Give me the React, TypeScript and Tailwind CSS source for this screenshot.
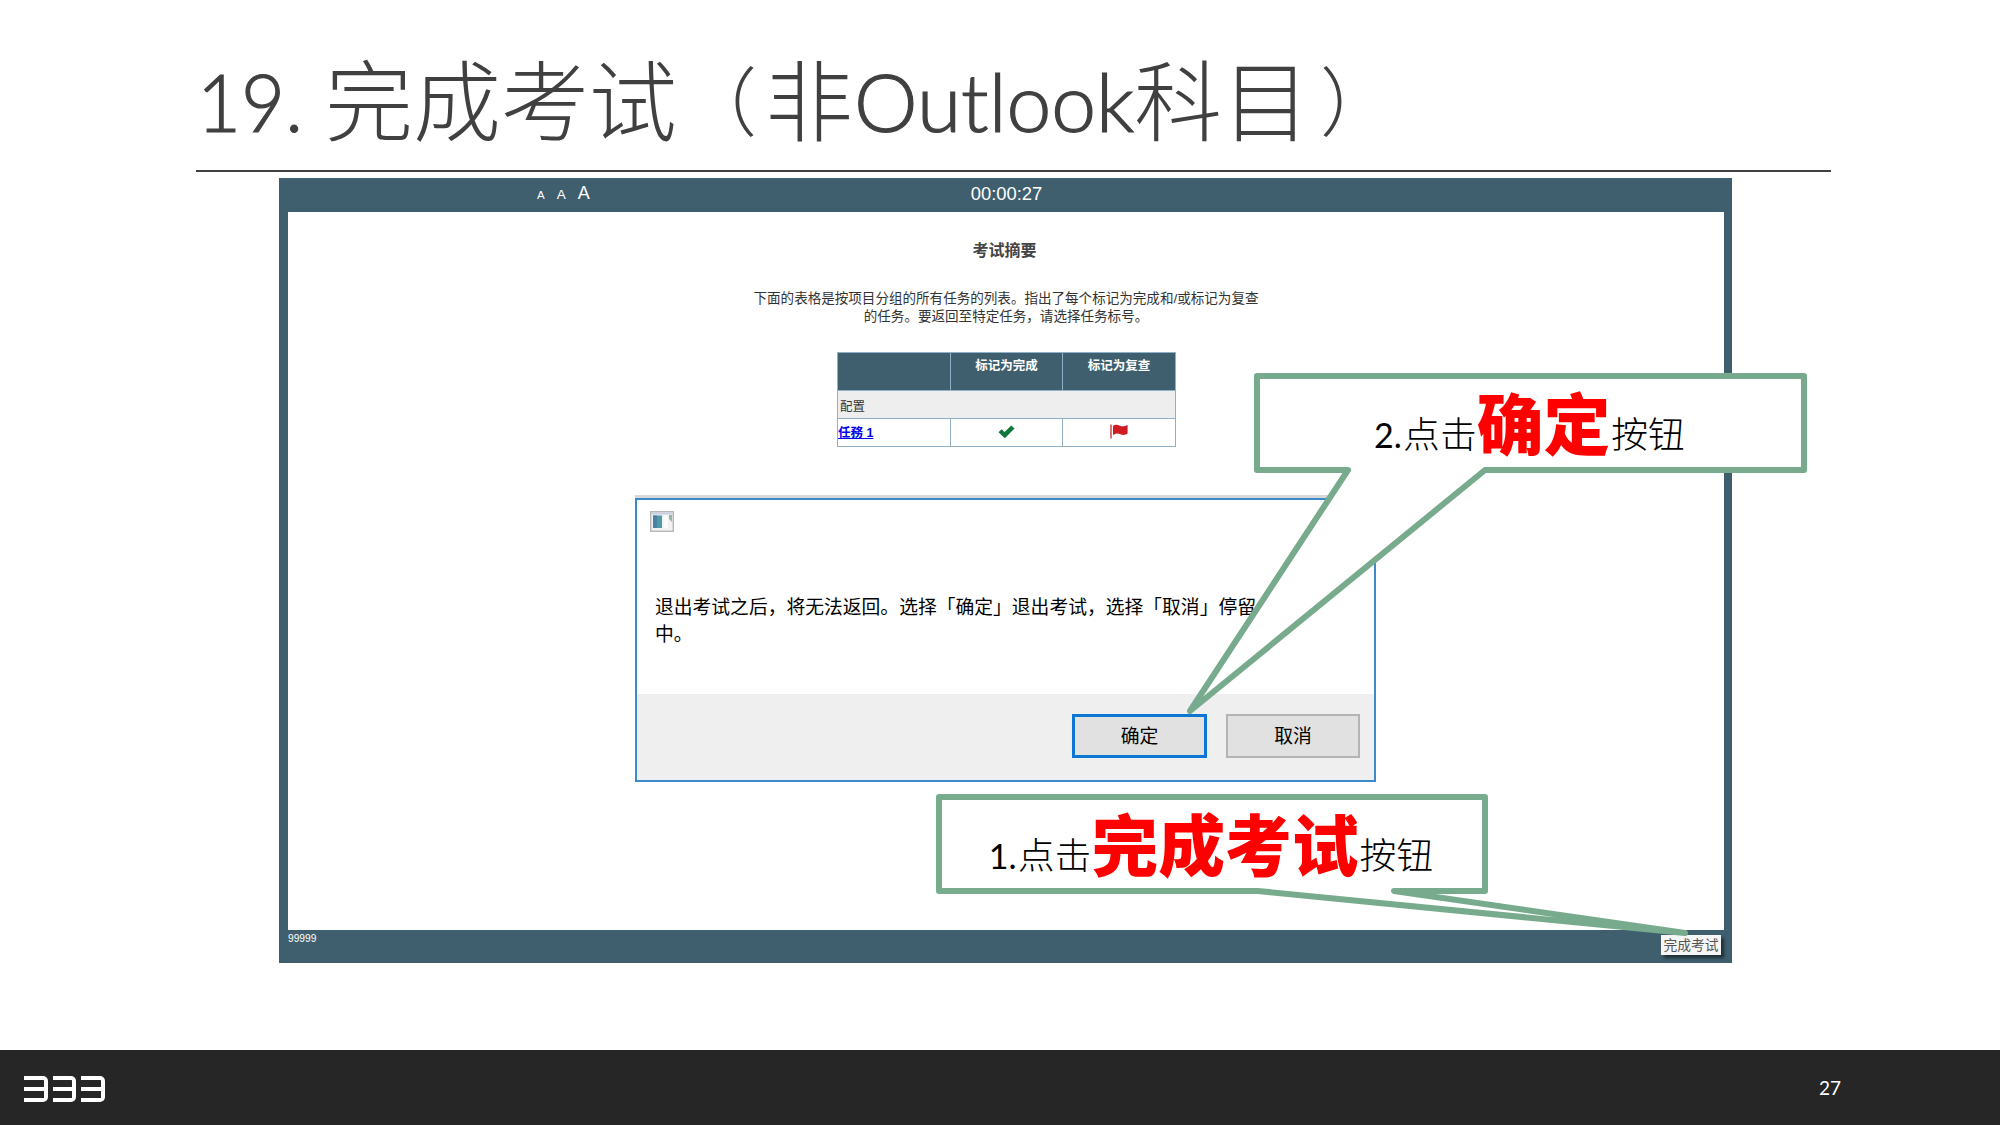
import React from "react";

const CJK = "font-['Liberation_Sans','Noto_Sans_CJK_SC',sans-serif]";

function Title() {
  return (
    <h1 className="ml-[196px] flex h-[170px] items-start pt-[32px] font-['Noto_Sans_CJK_SC',sans-serif] text-[88px] leading-[128px] font-light whitespace-nowrap text-[#404040]">
      <span className="w-[129px] shrink-0 pl-px font-['Lato',sans-serif] text-[80px] leading-[138px] [-webkit-text-stroke:1.2px_#404040]">
        <span className="inline-block origin-left scale-x-[0.95]">19.</span>
      </span>
      <span>完成考试</span>
      <span className="w-[88px] shrink-0 pl-[5px] text-[75px] leading-[132px]">（</span>
      <span>非</span>
      <span className="w-[281px] shrink-0 pl-px font-['Lato',sans-serif] text-[80px] leading-[138px] [-webkit-text-stroke:1.2px_#404040]">
        <span className="inline-block origin-left scale-x-[1.005]">Outlook</span>
      </span>
      <span>科目</span>
      <span className="pl-[10px] text-[75px] leading-[132px]">）</span>
    </h1>
  );
}

function SummaryTable() {
  return (
    <div className="mt-[26px] ml-[549px] grid w-[339px] grid-cols-[112px_112px_113px] grid-rows-[38px_28px_27px] border border-[#8fb0c8] text-[12.5px] text-[#333]">
      <div className="border-b border-[#8fb0c8] bg-[#3f5f6f]" />
      <div className="border-b border-l border-[#8fb0c8] bg-[#3f5f6f] pt-[4px] text-center leading-[18px] font-bold text-white">标记为完成</div>
      <div className="border-b border-l border-[#8fb0c8] bg-[#3f5f6f] pt-[4px] text-center leading-[18px] font-bold text-white">标记为复查</div>
      <div className="col-span-3 border-b border-[#8fb0c8] bg-[#eeeeee] pt-[6px] pl-[2px] leading-[20px]">配置</div>
      <div className="leading-[28px] font-bold text-[#0000ee] underline">任務 1</div>
      <div className="flex items-center justify-center border-l border-[#8fb0c8] pb-[2px]">
        <svg width="17" height="14" viewBox="0 0 17 14">
          <path d="M0.5 7.2 L3.6 4.2 L6.6 7 L13.2 0.6 L16.5 3.6 L6.8 13.2 Z" fill="#13773d" />
        </svg>
      </div>
      <div className="flex items-center justify-center border-l border-[#8fb0c8] pr-px pb-[2px]">
        <svg width="18" height="15" viewBox="0 0 18 15">
          <rect x="0.3" y="0.5" width="1.4" height="14" fill="#d0393f" />
          <path d="M3 1.8 C5.5 0.2 7.5 0.6 9.8 1.7 C12.5 2.8 14.5 2.3 17.6 0.9 V9.6 C14.5 11.5 12.3 11.3 9.8 10 C7.5 9 5.5 9.4 3 11 Z" fill="#cf1b21" />
        </svg>
      </div>
    </div>
  );
}

function ExamWindow() {
  return (
    <section className={`relative ml-[279px] flex h-[785px] w-[1453px] flex-col bg-[#3f5f6f] ${CJK}`}>
      <div className="flex h-[34px] items-start text-white">
        <div className="ml-[258px] flex items-baseline gap-[12px] leading-[30px]">
          <span className="text-[11.5px]">A</span>
          <span className="text-[13.5px]">A</span>
          <span className="text-[18px]">A</span>
        </div>
        <span className="ml-[381px] text-[18.4px] leading-[32px]">00:00:27</span>
      </div>
      <div className="ml-[9px] h-[718px] w-[1436px] bg-white">
        <h2 className="ml-[-3px] pt-[29px] text-center text-[16px] leading-[20px] font-bold text-[#444]">考试摘要</h2>
        <p className="mt-[29px] text-center text-[13.55px] leading-[18px] text-[#333]">
          下面的表格是按项目分组的所有任务的列表。指出了每个标记为完成和/或标记为复查
          <br />
          的任务。要返回至特定任务，请选择任务标号。
        </p>
        <SummaryTable />
      </div>
      <div className="flex flex-1 justify-between text-white">
        <span className="ml-[9px] text-[10.2px] leading-[17px]">99999</span>
        <span className="mt-[5px] mr-[11px] h-[20px] w-[60px] bg-[#f6f6f6] text-center text-[13.8px] leading-[21px] text-[#555] shadow-[3px_3px_3px_#1f2f38]">完成考试</span>
      </div>
    </section>
  );
}

function Dialog() {
  return (
    <div className={`absolute top-[495px] left-[635px] flex h-[287px] w-[741px] flex-col border-t-3 border-[#d9d9d9] text-[18.8px] text-black ${CJK}`}>
      <div className="flex flex-1 flex-col border-2 border-[#3c89cc] bg-white">
        <div className="flex-1 pt-[11px] pl-[13px]">
          <svg width="24" height="21" viewBox="0 0 24 21">
            <rect x="0.7" y="0.7" width="22.6" height="19.6" fill="#f1f1f1" stroke="#b7b7b7" strokeWidth="1.4" />
            <rect x="1.5" y="1.5" width="21" height="2" fill="#c9cfe0" />
            <rect x="3" y="4.5" width="9" height="12.5" fill="#4f9aa3" />
            <rect x="3" y="4.5" width="4" height="12.5" fill="#4a7fa6" />
            <rect x="13.5" y="4.5" width="4.5" height="12.5" fill="#fbfbfb" />
            <path d="M19 4 H22 V11 L19 8 Z" fill="#8fb9a8" />
          </svg>
          <p className="mt-[62px] ml-[5px] leading-[27px] whitespace-nowrap">
            退出考试之后，将无法返回。选择「确定」退出考试，选择「取消」停留
            <br />
            中。
          </p>
        </div>
        <div className="flex h-[86px] justify-end gap-[19px] bg-[#efefef] pt-[20px] pr-[14px]">
          <button className="h-[44px] w-[135px] border-3 border-[#0c76d3] bg-[#e1e1e1] leading-[37px]">确定</button>
          <button className="h-[44px] w-[134px] border-2 border-[#b4b4b4] bg-[#e1e1e1] leading-[39px]">取消</button>
        </div>
      </div>
    </div>
  );
}

function CalloutText({ num, keyword }: { num: string; keyword: string }) {
  return (
    <div className="flex justify-center font-['Noto_Sans_CJK_SC',sans-serif] text-[36.8px] font-light whitespace-nowrap text-black">
      <span className="w-[29px] font-['Lato',sans-serif] text-[34px] leading-[118px] font-normal">{num}</span>
      <span className="leading-[112px]">点击</span>
      <span className="text-[66.8px] leading-[90px] font-black text-[#ff0000]">{keyword}</span>
      <span className="pl-px leading-[112px]">按钮</span>
    </div>
  );
}

function Callouts() {
  return (
    <>
      <svg className="absolute top-0 left-0" width="2000" height="1125" viewBox="0 0 2000 1125">
        <g fill="#fff" stroke="#78ab8d" strokeWidth="6" strokeLinejoin="round">
          <path d="M1257 376 H1804 V470 H1485 L1190 711 L1348 470 H1257 Z" />
          <path d="M939 797 H1485 V891 H1394 L1685 933 L1258 891 H939 Z" />
        </g>
      </svg>
      <div className="absolute top-[376px] left-[1256px] w-[547px]">
        <CalloutText num="2." keyword="确定" />
      </div>
      <div className="absolute top-[797px] left-[938px] w-[546px]">
        <CalloutText num="1." keyword="完成考试" />
      </div>
    </>
  );
}

function Logo() {
  return (
    <div className="mt-[2px] flex gap-[5px]">
      {[0, 1, 2].map((i) => (
        <div key={i} className="flex h-[26px] w-[23.5px] items-center rounded-r-[5px] border-y-4 border-r-4 border-white">
          <div className="h-[4px] w-full bg-white" />
        </div>
      ))}
    </div>
  );
}

export default function App() {
  return (
    <main className="relative flex h-[1125px] w-[2000px] flex-col overflow-hidden bg-white">
      <Title />
      <div className="mb-[6px] ml-[196px] h-[2px] w-[1635px] shrink-0 bg-[#404040]" />
      <ExamWindow />
      <Dialog />
      <Callouts />
      <footer className="mt-auto flex h-[75px] items-center justify-between bg-[#262626] pr-[159px] pl-[24px] text-white">
        <Logo />
        <span className="mt-[2px] font-['Lato',sans-serif] text-[19px]">27</span>
      </footer>
    </main>
  );
}
